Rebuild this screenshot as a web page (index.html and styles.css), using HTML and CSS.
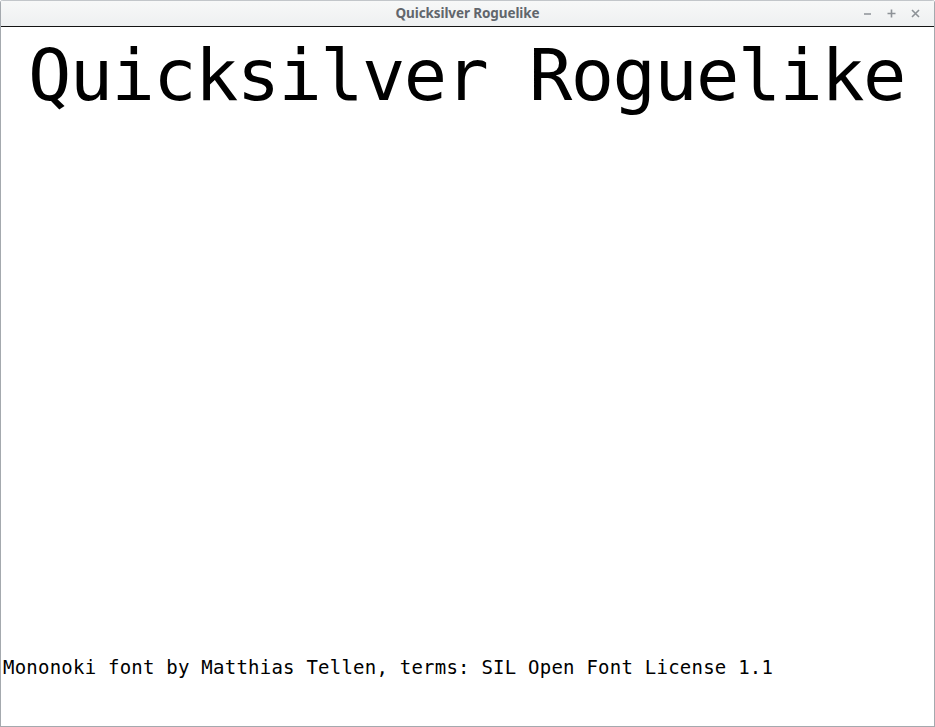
FILE: index.html
```html
<!DOCTYPE html>
<html>
<head>
<meta charset="utf-8">
<title>Quicksilver Roguelike</title>
<link rel="stylesheet" href="styles.css">
</head>
<body>
<div class="window">
  <header class="titlebar">
    <span class="title">Quicksilver Roguelike</span>
    <div class="controls">
      <span class="ctl">
        <svg width="9" height="9" viewBox="0 0 9 9"><path d="M1 5h7" stroke="#8d9297" stroke-width="1.6"/></svg>
      </span>
      <span class="ctl">
        <svg width="9" height="9" viewBox="0 0 9 9"><path d="M0.5 4.5h8M4.5 0.5v8" stroke="#8d9297" stroke-width="1.6"/></svg>
      </span>
      <span class="ctl">
        <svg width="9" height="9" viewBox="0 0 9 9"><path d="M1 1l7 7M8 1l-7 7" stroke="#8d9297" stroke-width="1.6"/></svg>
      </span>
    </div>
  </header>
  <main class="content">
    <h1 class="game-title">Quicksilver Roguelike</h1>
    <p class="credits">Mononoki font by Matthias Tellen, terms: SIL Open Font License 1.1</p>
  </main>
</div>
</body>
</html>
```

FILE: styles.css
```css
html, body {
  margin: 0;
  padding: 0;
  background: #ffffff;
}

.window {
  width: 935px;
  height: 727px;
  box-sizing: border-box;
  border: 1px solid #a4a9ae;
  border-top: none;
  border-radius: 3px 3px 0 0;
  display: flex;
  flex-direction: column;
  overflow: hidden;
}

.titlebar {
  flex: none;
  position: relative;
  background: linear-gradient(#f7f8f8, #eef0f1);
  border-top: 1px solid #c2c6ca;
  box-sizing: border-box;
  border-bottom: 1px solid #141414;
  height: 27px;
  display: flex;
  align-items: center;
  justify-content: center;
}

.title {
  font-family: "Noto Sans", "Open Sans", sans-serif;
  font-weight: bold;
  font-size: 13.5px;
  color: #61666c;
  letter-spacing: -0.1px;
  margin-top: -1px;
}

.controls {
  position: absolute;
  right: 14px;
  top: 0;
  bottom: 0;
  display: flex;
  align-items: center;
  gap: 15px;
}

.ctl {
  display: flex;
  width: 9px;
  height: 9px;
  margin-top: -1px;
}

.content {
  flex: 1;
  display: flex;
  flex-direction: column;
  background: #ffffff;
}

.game-title {
  margin: 12px 0 0 27px;
  font-family: "DejaVu Sans Mono", monospace;
  font-weight: normal;
  font-size: 72px;
  line-height: 72px;
  letter-spacing: -1.6px;
  color: #000000;
  white-space: nowrap;
}

.credits {
  margin: auto 0 49px 2px;
  font-family: "DejaVu Sans Mono", monospace;
  font-size: 19px;
  line-height: 19px;
  letter-spacing: 0.23px;
  color: #000000;
  white-space: nowrap;
}
```
